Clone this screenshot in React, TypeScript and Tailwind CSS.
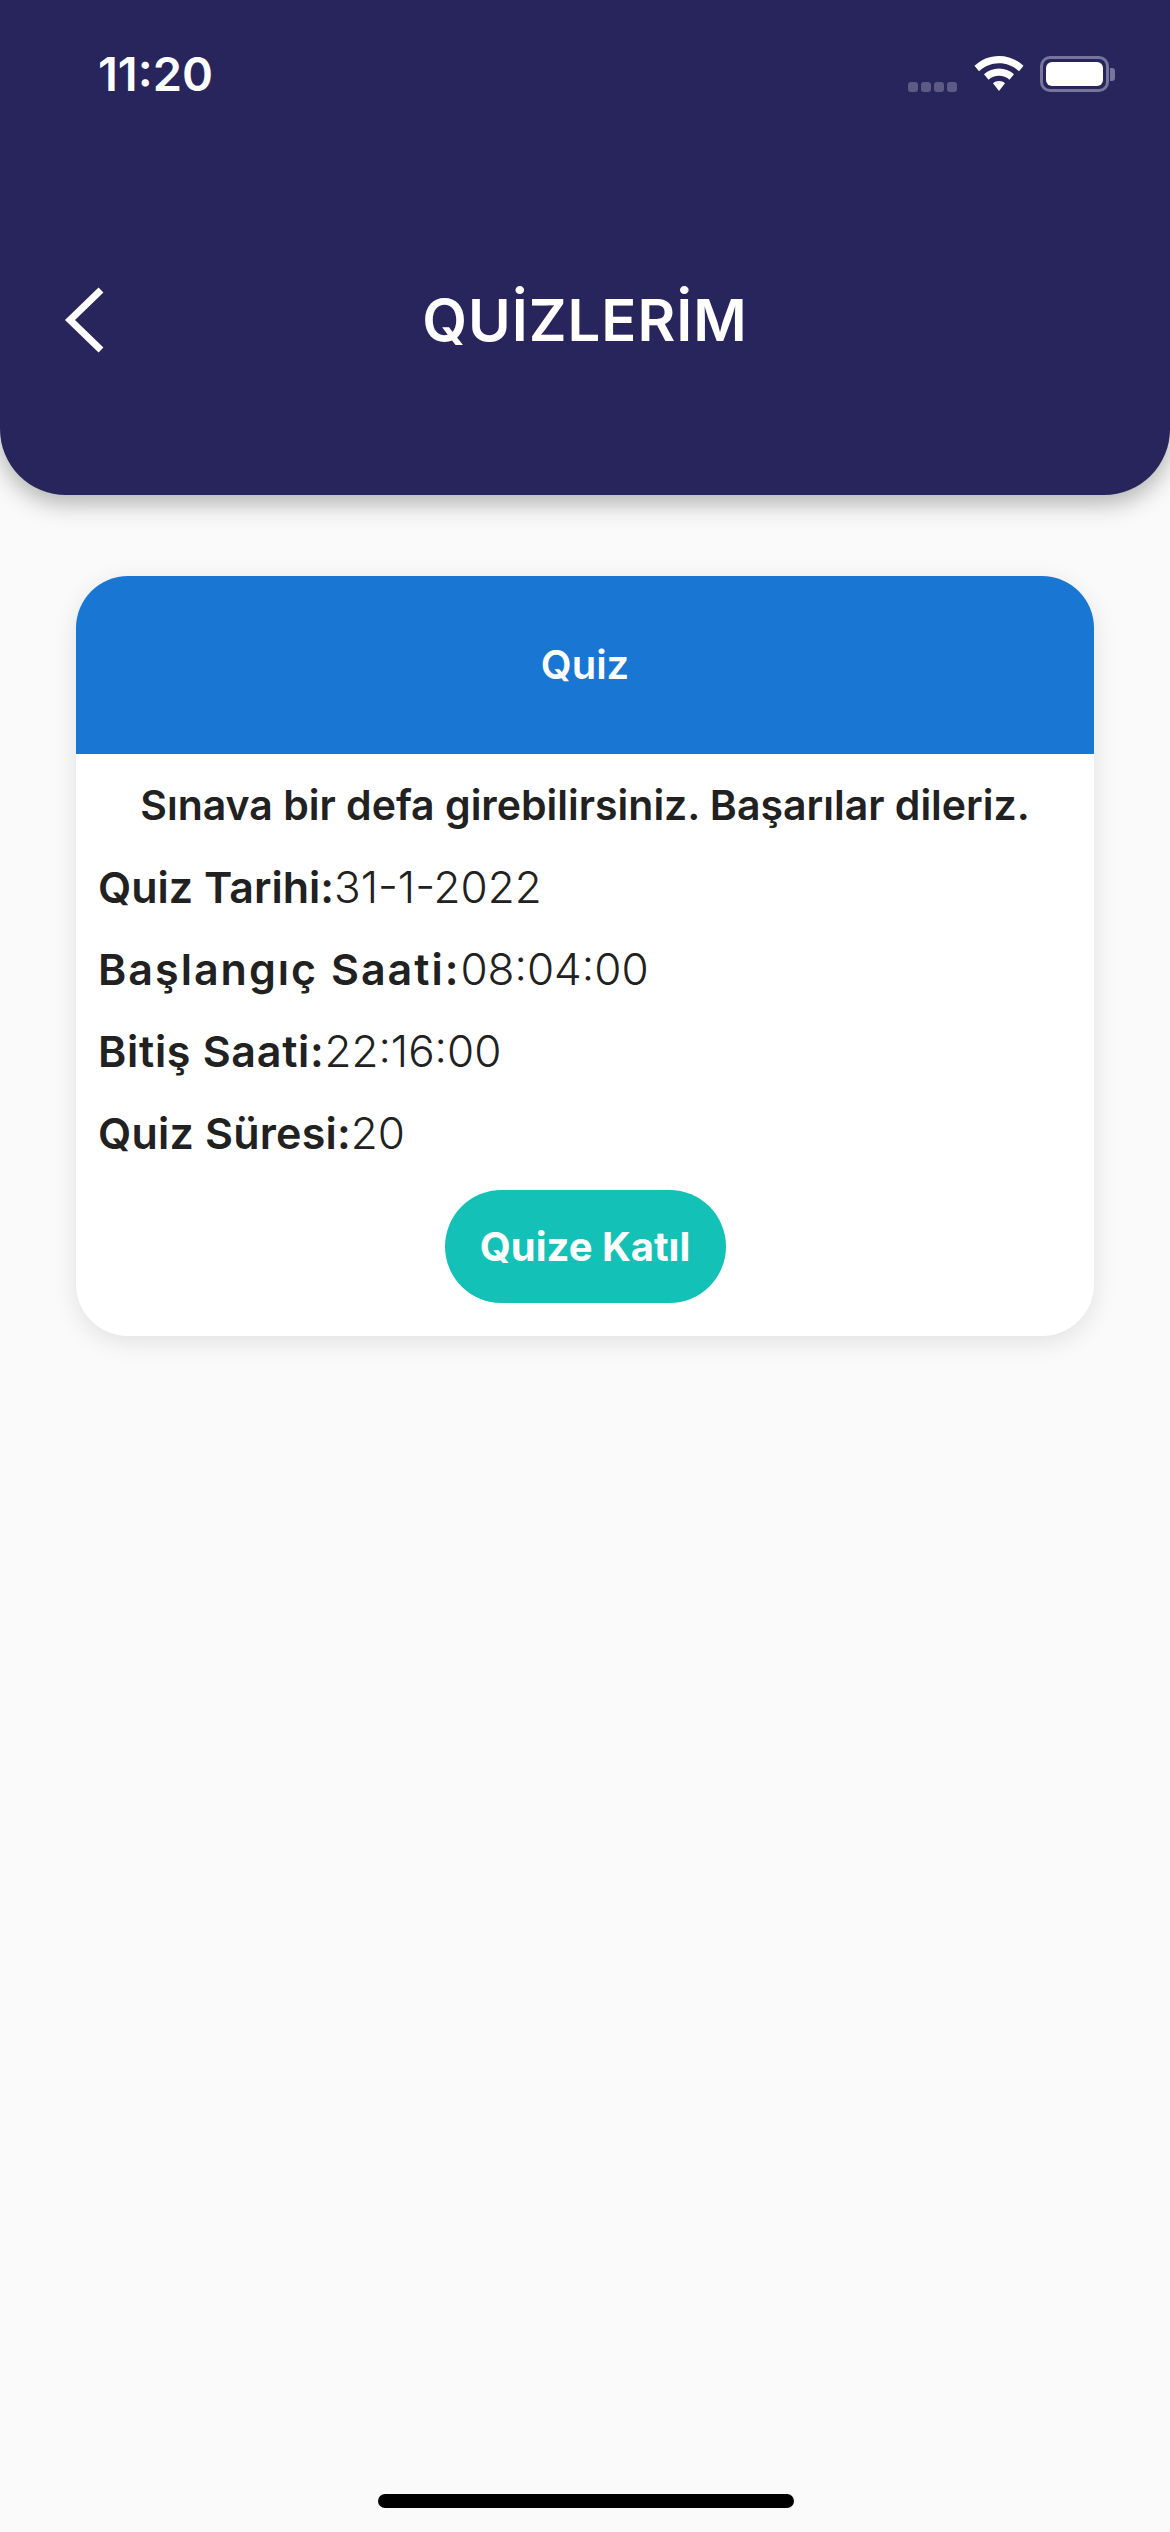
const font = "font-['Inter','Liberation_Sans',sans-serif]";

const rows = [
  { label: "Quiz Tarihi:", value: "31-1-2022", track: "tracking-[0px]" },
  { label: "Başlangıç Saati:", value: "08:04:00", track: "tracking-[2px]" },
  { label: "Bitiş Saati:", value: "22:16:00", track: "tracking-[0.7px]" },
  { label: "Quiz Süresi:", value: "20", track: "tracking-[0.2px]" },
];

function StatusIcons() {
  return (
    <div className="flex items-center">
      {/* sinyal noktalari */}
      <div className="flex gap-[3px] mt-[26px] mr-[17px]">
        <span className="w-[10px] h-[10px] rounded-[3px] bg-[#5d5a86]" />
        <span className="w-[10px] h-[10px] rounded-[3px] bg-[#5d5a86]" />
        <span className="w-[10px] h-[10px] rounded-[3px] bg-[#5d5a86]" />
        <span className="w-[10px] h-[10px] rounded-[3px] bg-[#5d5a86]" />
      </div>
      <svg width="50" height="36" viewBox="0 0 50 36" className="mr-[16px]">
        <path d="M25 0C15.500 0 7 3.700 0.500 9.800L5 15.300C10.300 10.300 17.300 7.300 25 7.300C32.700 7.300 39.700 10.300 45 15.300L49.500 9.800C43 3.700 34.500 0 25 0Z" fill="#fff" />
        <path d="M25 12.500C19.300 12.500 14.100 14.700 10 18.300L14.500 23.800C17.300 21.300 21 19.800 25 19.800C29 19.800 32.700 21.300 35.500 23.800L40 18.300C35.900 14.700 30.700 12.500 25 12.500Z" fill="#fff" />
        <path d="M25 25C22.700 25 20.600 25.800 19 27.200L25 35L31 27.200C29.400 25.800 27.300 25 25 25Z" fill="#fff" />
      </svg>
      <div className="flex items-center">
        <div className="w-[69px] h-[36px] rounded-[10px] border-[3px] border-[#77759c] p-[3px]">
          <div className="w-full h-full rounded-[6px] bg-white" />
        </div>
        <div className="w-[5px] h-[13px] ml-[1px] rounded-r-[3px] bg-[#77759c]" />
      </div>
    </div>
  );
}

export default function App() {
  return (
    <div className={`${font} w-[1170px] h-[2532px] bg-[#fafafa] flex flex-col relative`}>
      <header className="h-[495px] bg-[#27255b] rounded-b-[66px] shadow-[0_8px_24px_rgba(0,0,0,0.3)] flex flex-col text-white">
        <div className="flex justify-between pt-[48px] pl-[98px] pr-[55px]">
          <span className="text-[47px] leading-[52px] font-semibold">11:20</span>
          <StatusIcons />
        </div>
        <div className="mt-[188px] flex items-center justify-center relative">
          <svg width="42" height="66" viewBox="0 0 42 66" className="absolute left-[64px] top-[-1px]" fill="none" stroke="#fff" strokeWidth="7">
            <path d="M37 3L6 33L37 63" />
          </svg>
          <h1 className="text-[58px] leading-[64px] font-semibold tracking-[1px]">QUİZLERİM</h1>
        </div>
      </header>

      <main className="px-[76px] pt-[81px]">
        <section className="h-[760px] rounded-[52px] bg-white shadow-[0_6px_24px_rgba(0,0,0,0.1)] overflow-hidden text-[#212121] flex flex-col">
          <div className="h-[178px] bg-[#1976d2] flex items-center justify-center text-white text-[40px] font-semibold">
            Quiz
          </div>
          <div className="px-[22px] pt-[27px]">
            <p className="text-center text-[41px] leading-[49px] font-semibold whitespace-nowrap">Sınava bir defa girebilirsiniz. Başarılar dileriz.</p>
            {rows.map((row) => (
              <div key={row.label} className="mt-[32px] text-[43px] leading-[50px]">
                <span className={`font-semibold ${row.track}`}>{row.label}</span>
                <span className="font-light text-[44px]">{row.value}</span>
              </div>
            ))}
            <div className="mt-[32px] flex justify-center">
              <button className="w-[281px] h-[113px] rounded-[57px] bg-[#14c1b6] text-white text-[40px] font-bold">Quize Katıl</button>
            </div>
          </div>
        </section>
      </main>

      <div className="absolute bottom-[24px] left-[378px] w-[416px] h-[14px] rounded-full bg-black" />
    </div>
  );
}
